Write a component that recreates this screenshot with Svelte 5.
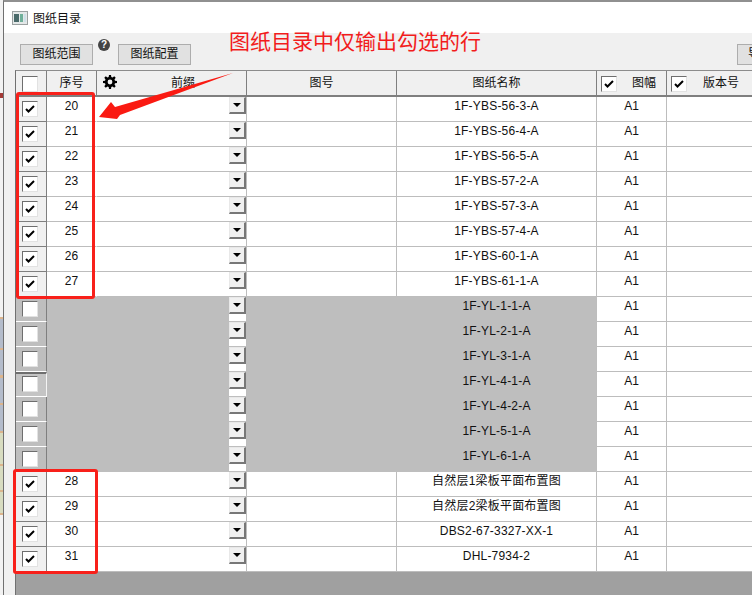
<script>
  const top = [[20,'1F-YBS-56-3-A'],[21,'1F-YBS-56-4-A'],[22,'1F-YBS-56-5-A'],[23,'1F-YBS-57-2-A'],[24,'1F-YBS-57-3-A'],[25,'1F-YBS-57-4-A'],[26,'1F-YBS-60-1-A'],[27,'1F-YBS-61-1-A']];
  const mid = ['1F-YL-1-1-A','1F-YL-2-1-A','1F-YL-3-1-A','1F-YL-4-1-A','1F-YL-4-2-A','1F-YL-5-1-A','1F-YL-6-1-A'];
  const bot = [[28,'自然层1梁板平面布置图'],[29,'自然层2梁板平面布置图'],[30,'DBS2-67-3327-XX-1'],[31,'DHL-7934-2']];
  const rows = [
    ...top.map(([n, name]) => ({ n, name, on: true })),
    ...mid.map((name) => ({ n: '', name, on: false })),
    ...bot.map(([n, name]) => ({ n, name, on: true }))
  ];
</script>

{#snippet box(on)}
  <span class="box">
    {#if on}
      <svg width="12" height="10" viewBox="0 0 12 10"><path d="M2 5 L4.5 7.5 L10 2" fill="none" stroke="#000" stroke-width="2"/></svg>
    {/if}
  </span>
{/snippet}

<div class="screen">
  <div class="desk"></div>
  <div class="window">
    <header class="title">
      <svg class="appicon" width="16" height="14" viewBox="0 0 16 14">
        <rect x="0.5" y="0.5" width="15" height="13" fill="#e4e8e8" stroke="#9aa0a0"/>
        <rect x="2" y="3" width="5" height="8" fill="#4a6a6a"/>
        <rect x="8" y="3" width="3" height="8" fill="#6fb09a"/>
        <rect x="12" y="3" width="2" height="8" fill="#cfe0e8"/>
      </svg>
      <span>图纸目录</span>
    </header>
    <div class="tools">
      <button class="btn first">图纸范围</button>
      <span class="help">?</span>
      <button class="btn">图纸配置</button>
      <button class="btn cut">导</button>
    </div>
    <div class="table">
      <div class="row head">
        <div class="cell c0">{@render box(false)}</div>
        <div class="cell">序号</div>
        <div class="cell gear">
          <svg class="cog" width="14" height="14" viewBox="0 0 14 14">
            <path fill-rule="evenodd" fill="#000" d="M6 0h2l.3 2 1.3.5L11.2 1.3l1.5 1.5-1.2 1.6.5 1.3 2 .3v2l-2 .3-.5 1.3 1.2 1.6-1.5 1.5-1.6-1.2-1.3.5L8 14H6l-.3-2-1.3-.5-1.6 1.2-1.5-1.5 1.2-1.6-.5-1.3-2-.3V6l2-.3.5-1.3L1.3 2.8l1.5-1.5 1.6 1.2L5.7 2ZM7 4.6a2.4 2.4 0 1 0 0 4.8 2.4 2.4 0 0 0 0-4.8Z"/>
          </svg>
          前缀
        </div>
        <div class="cell">图号</div>
        <div class="cell">图纸名称</div>
        <div class="cell chk">{@render box(true)}<span class="lab">图幅</span></div>
        <div class="cell chk last">{@render box(true)}<span class="lab wide">版本号</span></div>
      </div>
      {#each rows as r}
        <div class="row" class:off={!r.on}>
          <div class="cell c0" class:cur={r.name === '1F-YL-4-1-A'}>{@render box(r.on)}</div>
          <div class="cell num">{r.n}</div>
          <div class="cell pre"><span class="dropwrap"><span class="drop"><i></i></span></span></div>
          <div class="cell blank"></div>
          <div class="cell name">{r.name}</div>
          <div class="cell size">A1</div>
          <div class="cell last ver"></div>
        </div>
      {/each}
      <div class="empty"></div>
    </div>
  </div>

  <div class="note">图纸目录中仅输出勾选的行</div>
  <div class="mark m1"></div>
  <div class="mark m2"></div>
  <svg class="arrow" width="138" height="50" viewBox="0 0 138 50">
    <path d="M1 45 L13 30 L17 35 L135 1 L22 43 L19 47 Z" fill="#fa1a12"/>
  </svg>
</div>

<style>
  :global(body) { margin: 0; background: #fff; }
  .screen {
    position: relative; width: 752px; height: 595px; overflow: hidden; display: flex;
    font-family: "Liberation Sans", "Noto Sans CJK SC", sans-serif; font-size: 12px; color: #111;
  }
  .desk {
    width: 3px; flex: none;
    background: linear-gradient(#f2f2f2 0 93px, #a33a36 93px 98px, #f2f2f2 98px 317px, #dcb48c 317px 319px,
      #b4bccb 319px 348px, #dcb48c 348px 350px, #b4bccb 350px 375px, #dcb48c 375px 378px,
      #b4bccb 378px 403px, #dcb48c 403px 405px, #b4bccb 405px 431px, #dcb48c 431px 433px,
      #d8dcc0 433px 464px, #dcb48c 464px 466px, #d8dcc0 466px 490px, #dcb48c 490px 492px,
      #d8dcc0 492px 513px, #dcb48c 513px 515px, #f2f2f2 515px);
  }
  .window { flex: 1; min-width: 0; display: flex; flex-direction: column; border-left: 1px solid #707070; border-top: 2px solid #909090; background: #f0f0f0; }
  .title { height: 31px; flex: none; background: #fff; display: flex; align-items: center; gap: 5px; padding-left: 8px; font-size: 12px; }
  .appicon { flex: none; }
  .tools { box-sizing: border-box; height: 37px; flex: none; display: flex; align-items: flex-start; padding: 11px 0 0 16px; position: relative; }
  .btn {
    width: 73px; height: 21px; padding: 0; border: 1px solid #adadad; background: #e1e1e1; color: #111;
    font: inherit; font-size: 12px; line-height: 19px;
  }
  .help {
    width: 12px; height: 12px; border-radius: 50%; background: #444; color: #fff; font-size: 10px; font-weight: 700;
    line-height: 12px; text-align: center; margin: 0 8px 0 5px; position: relative; top: -5px;
  }
  .cut { position: absolute; left: 733px; width: 30px; text-align: left; padding-left: 10px; }
  .table { flex: 1; margin-left: 11px; border-top: 1px solid #8c8c8c; border-left: 1px solid #707070; display: flex; flex-direction: column; background: #a0a0a0; min-height: 0; }
  .row { display: grid; grid-template-columns: 31px 50px 150px 150px 200px 70px 86px; height: 25px; background: #fff; flex: none; }
  .head { height: 26px; background: #f0f0f0; }
  .cell { position: relative; box-sizing: border-box; border-right: 1px solid #bdbdbd; border-bottom: 1px solid #bdbdbd; text-align: center; line-height: 19px; min-width: 0; white-space: nowrap; }
  .head .cell { border-right-color: #7f7f7f; border-bottom: 2px solid #7f7f7f; line-height: 24px; }
  .c0 { background: #f0f0f0; border-right-color: #7f7f7f; border-bottom-color: #7f7f7f; display: flex; align-items: flex-start; padding: 4px 0 0 6px; }
  .head .c0 { line-height: normal; padding-top: 5px; }
  .row .num { border-right: 1px solid transparent; }
  .box { box-sizing: border-box; width: 16px; height: 16px; background: #fff; border: 1px solid; border-color: #6e6e6e #e2e2e2 #e2e2e2 #6e6e6e; display: flex; align-items: center; justify-content: center; }
  .cell.gear { padding-left: 23px; }
  .cog { position: absolute; left: 6px; top: 4px; }
  .chk { display: flex; align-items: flex-start; padding: 5px 0 0 4px; }
  .lab { position: absolute; left: 35px; top: 0; }
  .lab.wide { left: 36px; }
  .pre { display: flex; justify-content: flex-end; }
  .dropwrap { display: block; width: 17px; height: 24px; }
  .drop { box-sizing: border-box; width: 17px; height: 17px; background: #f0f0f0; border-right: 2px solid #777; border-bottom: 2px solid #777; border-top: 1px solid #e8e8e8; border-left: 1px solid #e8e8e8; display: flex; align-items: center; justify-content: center; }
  .drop i { display: block; width: 0; height: 0; border-left: 4px solid transparent; border-right: 4px solid transparent; border-top: 4px solid #000; }
  .name { letter-spacing: 0.2px; }
  .off .c0 { background: #bebebe; border-bottom-color: #fff; }
  .off .c0.cur { background: #c4c4c4; border-top: 2px solid #6e6e6e; border-right-color: #f4f4f4; padding-top: 2px; }
  .off .num, .off .blank, .off .name, .off .pre { background: #bebebe; border-bottom-color: #bebebe; }
  .off .num { border-right-color: #bebebe; }
  .off .blank { border-right-color: #bebebe; }
  .off .dropwrap { background: #fff; }
  .last { border-right: 0; }
  .empty { flex: 1; background: #a0a0a0; }

  .note { position: absolute; left: 229px; top: 29px; font-size: 21px; line-height: 26px; color: #f21c1c; }
  .mark { position: absolute; box-sizing: border-box; border: 3px solid #f8201a; border-radius: 3px; }
  .m1 { left: 16px; top: 92px; width: 79px; height: 207px; }
  .m2 { left: 13px; top: 469px; width: 85px; height: 105px; }
  .arrow { position: absolute; left: 98px; top: 72px; }
</style>
